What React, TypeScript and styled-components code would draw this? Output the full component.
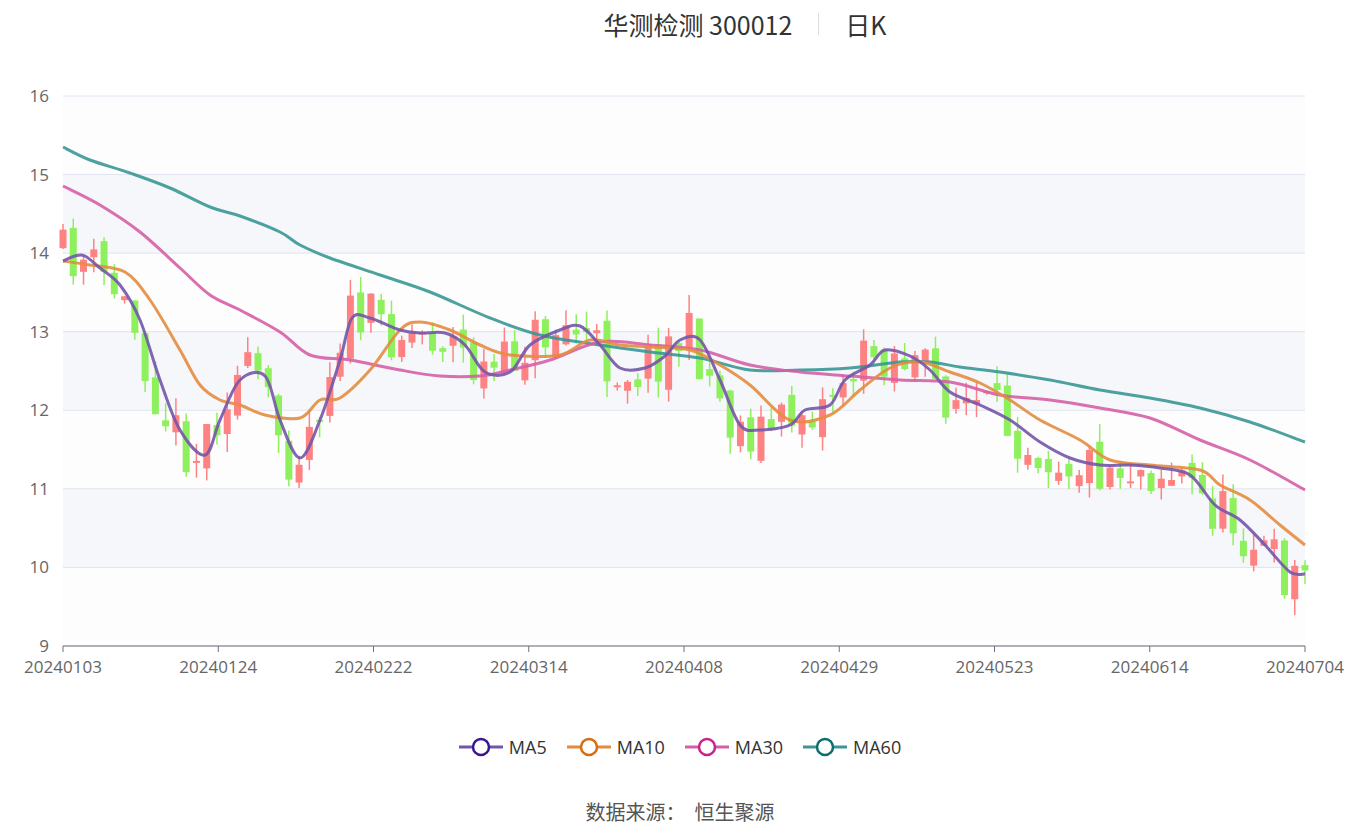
import React from 'react'
import styled, { createGlobalStyle } from 'styled-components'

const GlobalStyle = createGlobalStyle`
  body { margin: 0; background: #fff; font-family: "Noto Sans CJK SC", "Noto Sans", sans-serif; }
`

const X0 = 63
const X1 = 1305
const Y16 = 96
const UNIT = 78.57
const N = 122
const yOf = (p: number) => Y16 + (16 - p) * UNIT

type Pt = [number, number]

const ma5: Pt[] = [[63,261],[75,256],[85,256],[100,268],[120,285],[140,320],[160,380],[180,430],[205,455],[220,420],[240,380],[265,376],[280,420],[300,458],[320,420],[340,360],[352,318],[370,318],[400,330],[420,333],[445,333],[465,345],[485,372],[510,372],[530,345],[560,330],[580,326],[600,345],[620,368],[645,368],[665,356],[680,340],[700,340],[720,380],[740,425],[760,430],[790,425],[805,410],[830,405],[845,380],[870,365],[885,350],[910,356],[930,370],[950,392],[980,405],[1010,420],[1040,442],[1070,458],[1100,465],[1130,465],[1160,468],[1190,475],[1215,505],[1240,520],[1265,545],[1290,572],[1305,574]]
const ma10: Pt[] = [[63,261],[90,265],[125,272],[150,300],[180,350],[200,385],[220,400],[240,405],[265,415],[300,418],[320,400],[340,398],[370,370],[400,330],[420,322],[450,330],[480,345],[510,355],[560,355],[590,340],[620,345],[650,347],[690,350],[720,365],[750,385],[790,420],[830,415],[860,390],[890,368],[920,362],[950,372],[980,383],[1010,400],[1040,420],[1080,440],[1110,460],[1150,465],[1200,470],[1220,485],[1250,500],[1280,525],[1305,545]]
const ma30: Pt[] = [[63,186],[100,205],[140,232],[180,268],[210,295],[240,310],[280,332],[310,355],[350,360],[400,370],[440,376],[480,376],[510,370],[550,360],[600,342],[650,345],[700,350],[750,365],[800,372],[850,376],[900,380],[950,382],[1000,395],[1050,400],[1100,408],[1150,418],[1200,440],[1250,460],[1305,490]]
const ma60: Pt[] = [[63,147],[90,160],[130,173],[170,188],[210,207],[240,216],[280,232],[300,245],[330,258],[380,275],[430,292],[490,318],[540,335],[600,345],[650,352],[700,358],[750,370],[800,370],[850,368],[900,362],[930,362],[960,367],[1000,372],[1050,380],[1100,390],[1150,398],[1200,408],[1250,422],[1305,442]]

const smooth = (pts: Pt[]) => {
  let d = `M${pts[0][0]},${pts[0][1]}`
  for (let i = 0; i < pts.length - 1; i++) {
    const p0 = pts[i - 1] || pts[i], p1 = pts[i], p2 = pts[i + 1], p3 = pts[i + 2] || p2
    const c1x = p1[0] + (p2[0] - p0[0]) / 6, c1y = p1[1] + (p2[1] - p0[1]) / 6
    const c2x = p2[0] - (p3[0] - p1[0]) / 6, c2y = p2[1] - (p3[1] - p1[1]) / 6
    d += ` C${c1x.toFixed(1)},${c1y.toFixed(1)} ${c2x.toFixed(1)},${c2y.toFixed(1)} ${p2[0]},${p2[1]}`
  }
  return d
}

const interp = (pts: Pt[], x: number) => {
  for (let i = 0; i < pts.length - 1; i++) {
    if (x <= pts[i + 1][0]) {
      const t = (x - pts[i][0]) / (pts[i + 1][0] - pts[i][0])
      return pts[i][1] + t * (pts[i + 1][1] - pts[i][1])
    }
  }
  return pts[pts.length - 1][1]
}

let seed = 11
const rnd = () => {
  seed = (seed * 16807) % 2147483647
  return seed / 2147483647
}

// candles wander around the MA5 curve
const candles = (() => {
  const out: { x: number; o: number; c: number; h: number; l: number }[] = []
  let prev = yOf(14.05)
  for (let i = 0; i < N; i++) {
    const x = X0 + (i * (X1 - X0)) / (N - 1)
    const base = interp(ma5, Math.min(X1, x + 8))
    const c = base + (rnd() - 0.5) * 56
    const o = prev + (rnd() - 0.5) * 20
    const h = Math.min(o, c) - rnd() * 18
    const l = Math.max(o, c) + rnd() * 18
    out.push({ x, o, c, h, l })
    prev = c
  }
  return out
})()

const yTicks = [16, 15, 14, 13, 12, 11, 10, 9]
const xLabels = ['20240103', '20240124', '20240222', '20240314', '20240408', '20240429', '20240523', '20240614', '20240704']

const lines = [
  { pts: ma60, color: '#3a9795', dot: '#0d6e6c', name: 'MA60' },
  { pts: ma30, color: '#d55fa6', dot: '#c8238a', name: 'MA30' },
  { pts: ma10, color: '#e48c3e', dot: '#d96c10', name: 'MA10' },
  { pts: ma5, color: '#7455a8', dot: '#3b1590', name: 'MA5' },
]

const Page = styled.div`
  width: 1360px;
  height: 828px;
  display: flex;
  flex-direction: column;
  align-items: center;
  overflow: hidden;
`

const Title = styled.div`
  margin-top: 4px;
  height: 40px;
  display: flex;
  align-items: center;
  gap: 26px;
  font-size: 25px;
  color: #333;
  padding-left: 130px;
`

const Sep = styled.span`
  width: 1px;
  height: 22px;
  background: #ddd;
`

const Chart = styled.svg`
  display: block;
  margin-top: -44px;
`

const Legend = styled.div`
  display: flex;
  gap: 20px;
  margin-top: 15px;
  font-size: 18px;
  color: #333;
  font-family: "Open Sans", "Noto Sans", sans-serif;
`

const LegendItem = styled.div`
  display: flex;
  align-items: center;
  gap: 6px;
`

const Source = styled.div`
  margin-top: 38px;
  font-size: 20px;
  color: #555;
`

export default function App() {
  return (
    <Page>
      <GlobalStyle />
      <Title>
        <span>华测检测 300012</span>
        <Sep />
        <span>日K</span>
      </Title>
      <Chart width={1360} height={720} viewBox="0 0 1360 720">
        {yTicks.slice(0, -1).map((p, i) => (
          <rect key={p} x={X0} y={yOf(p)} width={X1 - X0} height={UNIT} fill={i % 2 === 1 ? '#f6f7fb' : '#fdfdfe'} />
        ))}
        {yTicks.map(p => (
          <g key={p}>
            <line x1={X0} x2={X1} y1={yOf(p)} y2={yOf(p)} stroke="#e0e4f0" strokeWidth={1} />
            <text x={49} y={yOf(p) + 6} textAnchor="end" fontSize={17} fill="#666" fontFamily="Open Sans, sans-serif">{p}</text>
          </g>
        ))}
        <line x1={X0} x2={X1} y1={646} y2={646} stroke="#6e7079" />
        {xLabels.map((l, i) => {
          const x = X0 + (i * (X1 - X0)) / 8
          return (
            <g key={l}>
              <line x1={x} x2={x} y1={646} y2={652} stroke="#6e7079" />
              <text x={x} y={673} textAnchor="middle" fontSize={17} fill="#666" fontFamily="Open Sans, sans-serif">{l}</text>
            </g>
          )
        })}
        {candles.map((k, i) => {
          const up = k.c < k.o
          const col = up ? '#ff8282' : '#8ef05c'
          const top = Math.min(k.o, k.c)
          return (
            <g key={i}>
              <line x1={k.x} x2={k.x} y1={k.h} y2={k.l} stroke={col} strokeWidth={1.5} />
              <rect x={k.x - 3.5} y={top} width={7} height={Math.max(2, Math.abs(k.o - k.c))} fill={col} />
            </g>
          )
        })}
        {lines.map(l => (
          <path key={l.name} d={smooth(l.pts)} fill="none" stroke={l.color} strokeWidth={3} strokeOpacity={0.9} />
        ))}
      </Chart>
      <Legend>
        {[...lines].reverse().map(l => (
          <LegendItem key={l.name}>
            <svg width={44} height={20}>
              <line x1={0} x2={44} y1={10} y2={10} stroke={l.color} strokeWidth={3} />
              <circle cx={22} cy={10} r={8} fill="#fff" stroke={l.dot} strokeWidth={2.5} />
            </svg>
            <span>{l.name}</span>
          </LegendItem>
        ))}
      </Legend>
      <Source>数据来源：&nbsp;&nbsp;恒生聚源</Source>
    </Page>
  )
}
